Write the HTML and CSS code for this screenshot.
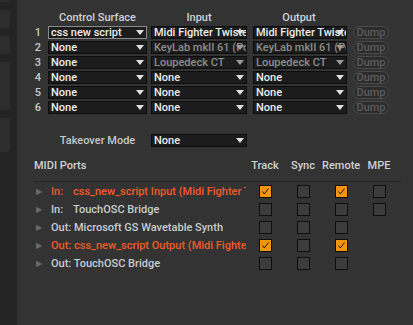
FILE: index.html
```html
<!DOCTYPE html>
<html lang="en">
<head>
    <meta charset="UTF-8">
    <title>Link / Tempo / MIDI</title>
    <link rel="stylesheet" href="styles.css">
</head>
<body>
    <div class="app">
        <div class="sidebar">
            <div class="tab tab-top"></div>
            <div class="tab tab-a"></div>
            <div class="tab tab-b"></div>
            <div class="tab tab-c"></div>
            <div class="tab tab-d"></div>
        </div>

        <div class="panel">
            <div class="surfaces">
                <div></div>
                <div class="col-head">Control Surface</div>
                <div class="col-head">Input</div>
                <div class="col-head">Output</div>
                <div></div>

                <div class="num">1</div>
                <div class="select focused">css new script</div>
                <div class="select">Midi Fighter Twister</div>
                <div class="select">Midi Fighter Twister</div>
                <div class="dump">Dump</div>

                <div class="num">2</div>
                <div class="select">None</div>
                <div class="select dim">KeyLab mkII 61 (Port 1)</div>
                <div class="select dim">KeyLab mkII 61 (Port 1)</div>
                <div class="dump">Dump</div>

                <div class="num">3</div>
                <div class="select">None</div>
                <div class="select dim">Loupedeck CT</div>
                <div class="select dim">Loupedeck CT</div>
                <div class="dump">Dump</div>

                <div class="num">4</div>
                <div class="select">None</div>
                <div class="select">None</div>
                <div class="select">None</div>
                <div class="dump">Dump</div>

                <div class="num">5</div>
                <div class="select">None</div>
                <div class="select">None</div>
                <div class="select">None</div>
                <div class="dump">Dump</div>

                <div class="num">6</div>
                <div class="select">None</div>
                <div class="select">None</div>
                <div class="select">None</div>
                <div class="dump">Dump</div>

                <div class="takeover-gap"></div>

                <div></div>
                <div class="takeover-label">Takeover Mode</div>
                <div class="select">None</div>
            </div>

            <div class="ports">
                <div class="ports-head">
                    <span class="ports-title">MIDI Ports</span>
                    <span class="flag-head">Track</span>
                    <span class="flag-head">Sync</span>
                    <span class="flag-head">Remote</span>
                    <span class="flag-head">MPE</span>
                </div>

                <div class="port active">
                    <span class="arrow">&#9654;</span>
                    <span class="port-name"><span class="dir">In:</span>css_new_script Input (Midi Fighter Twister)</span>
                    <span class="check on"><svg viewBox="0 0 11 11"><path d="M2.5 5.5 L4.3 8 L8.5 2.5"/></svg></span>
                    <span class="check"></span>
                    <span class="check on"><svg viewBox="0 0 11 11"><path d="M2.5 5.5 L4.3 8 L8.5 2.5"/></svg></span>
                    <span class="check"></span>
                </div>
                <div class="port">
                    <span class="arrow">&#9654;</span>
                    <span class="port-name"><span class="dir">In:</span>TouchOSC Bridge</span>
                    <span class="check"></span>
                    <span class="check"></span>
                    <span class="check"></span>
                    <span class="check"></span>
                </div>
                <div class="port">
                    <span class="arrow">&#9654;</span>
                    <span class="port-name">Out: Microsoft GS Wavetable Synth</span>
                    <span class="check"></span>
                    <span class="check"></span>
                    <span class="check"></span>
                    <span></span>
                </div>
                <div class="port active">
                    <span class="arrow">&#9654;</span>
                    <span class="port-name">Out: css_new_script Output (Midi Fighter Twister)</span>
                    <span class="check on"><svg viewBox="0 0 11 11"><path d="M2.5 5.5 L4.3 8 L8.5 2.5"/></svg></span>
                    <span class="check"></span>
                    <span class="check on"><svg viewBox="0 0 11 11"><path d="M2.5 5.5 L4.3 8 L8.5 2.5"/></svg></span>
                    <span></span>
                </div>
                <div class="port">
                    <span class="arrow">&#9654;</span>
                    <span class="port-name">Out: TouchOSC Bridge</span>
                    <span class="check"></span>
                    <span class="check"></span>
                    <span class="check"></span>
                    <span></span>
                </div>
            </div>
        </div>
    </div>
</body>
</html>
```

FILE: styles.css
```css
html, body {
    margin: 0;
    padding: 0;
}
body {
    font-family: Roboto, "Liberation Sans", sans-serif;
    font-size: 11px;
    font-weight: 500;
    color: #d9d9d9;
    background: #323232;
}
.app {
    display: flex;
    width: 413px;
    height: 325px;
    overflow: hidden;
}
.sidebar {
    width: 17px;
    flex-shrink: 0;
    background: #242424;
    display: flex;
    flex-direction: column;
}
.tab {
    width: 10px;
    background: #2d2d2d;
    border-radius: 0 3px 3px 0;
}
.tab-top { height: 2px; margin-bottom: 8px; }
.tab-a { height: 18px; margin-bottom: 8px; }
.tab-b { height: 18px; margin-bottom: 8px; }
.tab-c { height: 48px; margin-bottom: 8px; }
.tab-d { height: 34px; }
.panel {
    flex: 1;
    background: #333333;
    padding: 11px 0 0 15px;
}

/* control surface table */
.surfaces {
    display: grid;
    grid-template-columns: 12px 99px 96px 96px 38px;
    grid-template-rows: repeat(7, 13px) 16px 13px;
    column-gap: 4px;
    row-gap: 2px;
}
.surfaces > :nth-child(5n+4),
.surfaces > :nth-child(5n) {
    margin-left: 2px;
}
.col-head {
    text-align: center;
    color: #cdd2d6;
    line-height: 13px;
}
.surfaces > .col-head {
    margin-left: 0;
    margin-bottom: 2px;
}
.num {
    text-align: center;
    line-height: 13px;
    color: #c8c8c8;
}
.select {
    position: relative;
    box-sizing: border-box;
    height: 13px;
    background: #1c1c1c;
    border: 1px solid #0c0c0c;
    color: #ececec;
    line-height: 11px;
    padding: 0 6px 0 2px;
    white-space: nowrap;
    overflow: hidden;
}
.select::after {
    content: "";
    position: absolute;
    right: 2px;
    top: 3px;
    border-left: 4px solid transparent;
    border-right: 4px solid transparent;
    border-top: 5px solid #e0e0e0;
}
.select.focused {
    border-color: #8a8a8a;
}
.select.dim {
    color: #8c8c8c;
}
.select.dim::after {
    border-top-color: #9a9a9a;
}
.dump {
    box-sizing: border-box;
    height: 13px;
    border: 1px solid #4a4a4a;
    border-radius: 7px;
    background: #2c2c2c;
    color: #5c5c5c;
    line-height: 11px;
    text-align: center;
}

/* takeover row */
.surfaces > .takeover-gap {
    grid-column: 1 / -1;
    margin: 0;
}
.takeover-label {
    text-align: center;
    line-height: 13px;
    color: #c4c8cb;
}
.surfaces > .takeover-label,
.surfaces > .takeover-label + .select {
    margin-left: 0;
}

/* midi ports */
.ports {
    margin: 12px 0 0 2px;
    width: 367px;
}
.ports-head {
    display: grid;
    grid-template-columns: 212px 38px 38px 38px 38px;
    align-items: end;
    padding: 0 0 9px 0;
    border-bottom: 1px solid #232323;
    color: #cdd2d6;
}
.flag-head {
    text-align: center;
}
.port {
    display: grid;
    grid-template-columns: 17px 195px 38px 38px 38px 38px;
    align-items: center;
    height: 18px;
    color: #c8ccd0;
}
.port.active {
    color: #f25a29;
}
.arrow {
    color: #6b6b6b;
    font-size: 8px;
    padding-left: 2px;
}
.port-name {
    white-space: nowrap;
    overflow: hidden;
    padding-right: 3px;
}
.dir {
    display: inline-block;
    width: 22px;
}
.check {
    justify-self: center;
    box-sizing: border-box;
    width: 13px;
    height: 13px;
    border: 1px solid #0e0e0e;
    background: #3c3c3c;
}
.check.on {
    background: #f5950f;
}
.check svg {
    display: block;
    width: 11px;
    height: 11px;
    fill: none;
    stroke: #1a1a1a;
    stroke-width: 1;
}
```
